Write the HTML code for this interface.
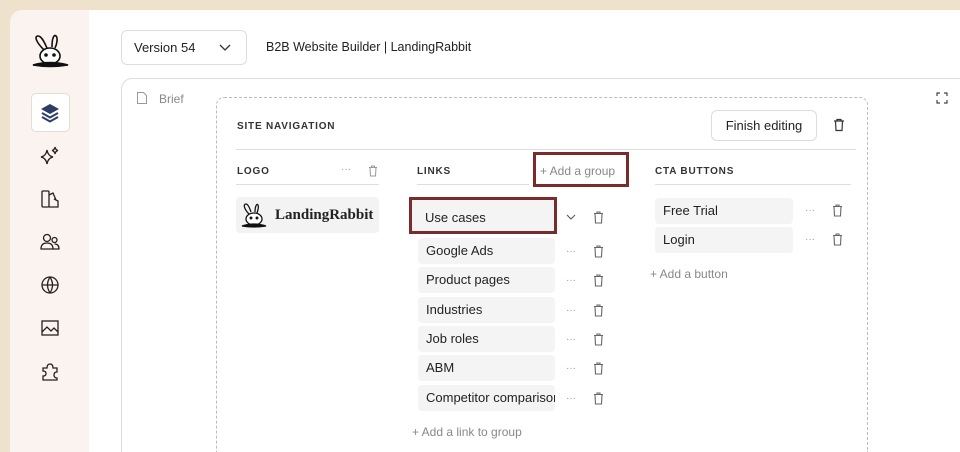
<!DOCTYPE html>
<html><head><meta charset="utf-8"><style>
*{box-sizing:border-box;margin:0;padding:0}
html,body{width:960px;height:452px;overflow:hidden}
body{background:#efe2cc;font-family:"Liberation Sans",sans-serif;position:relative;color:#222}
.a{position:absolute}
.side{left:10px;top:10px;width:80px;height:442px;background:#fbf3ef;border-radius:12px 0 0 0}
.main{left:89px;top:10px;width:871px;height:442px;background:#fff}
.ic{left:38px;width:24px;height:24px}
.item{position:absolute;left:418px;width:137px;height:26px;background:#f4f4f4;border-radius:4px;font-size:13px;line-height:26px;padding-left:8px;white-space:nowrap;overflow:hidden;color:#222}
.cta{position:absolute;left:655px;width:138px;height:26px;background:#f4f4f4;border-radius:4px;font-size:13px;line-height:26px;padding-left:8px}
.dots{position:absolute;font-size:10px;color:#999}
.hd{position:absolute;font-size:10px;font-weight:bold;letter-spacing:0.8px;color:#333}
.ln{position:absolute;height:1px;background:#ddd}
</style></head><body>
<div class="a side"></div>
<div class="a main"></div>
<svg class="a" style="left:30px;top:32px" width="42" height="38" viewBox="0 0 42 38" fill="none" stroke="#111" stroke-width="1.6">
<path d="M14 18 C6 10 4 4 8 4 C12 4 15 12 17 16"/><path d="M22 15 C22 6 24 2 26 4 C28 6 27 12 25 16"/>
<ellipse cx="20" cy="24" rx="10" ry="8" fill="#fff"/><circle cx="16" cy="23" r="1" fill="#111"/><circle cx="24" cy="23" r="1" fill="#111"/>
<path d="M3 33 Q20 28 38 33 Q20 36 3 33Z" fill="#111"/></svg>
<div class="a" style="left:31px;top:93px;width:39px;height:39px;background:#fff;border:1px solid #e3dcd8;border-radius:5px"></div>
<svg class="a ic" style="top:101px" viewBox="0 0 24 24"><path d="M12 3 L21 8 L12 13 L3 8Z" fill="#2c3e66"/><path d="M4 12 L12 16.5 L20 12" stroke="#2c3e66" stroke-width="2" fill="none"/><path d="M4 16 L12 20.5 L20 16" stroke="#2c3e66" stroke-width="2" fill="none"/></svg>
<svg class="a ic" style="top:144px" viewBox="0 0 24 24" fill="none" stroke="#222" stroke-width="1.3"><path d="M9 6 Q10 12 15 13 Q10 14 9 20 Q8 14 3 13 Q8 12 9 6Z"/><path d="M17 3 Q17.5 6 20 6.5 Q17.5 7 17 10 Q16.5 7 14 6.5 Q16.5 6 17 3Z"/></svg>
<svg class="a ic" style="top:187px" viewBox="0 0 24 24" fill="none" stroke="#222" stroke-width="1.3"><rect x="4" y="4" width="7" height="16" rx="1"/><path d="M11 8 L15 6 L18 13 M11 20 H20 V14 L16 12"/></svg>
<svg class="a ic" style="top:230px" viewBox="0 0 24 24" fill="none" stroke="#222" stroke-width="1.3"><circle cx="9" cy="8" r="3.5"/><circle cx="16.5" cy="10" r="2.5"/><path d="M3 19 Q3 13 9 13 Q15 13 15 19Z"/><path d="M15 19 H21 Q21 14 16.5 14"/></svg>
<svg class="a ic" style="top:273px" viewBox="0 0 24 24" fill="none" stroke="#222" stroke-width="1.3"><circle cx="12" cy="12" r="8"/><path d="M4 12H20M12 4Q7 12 12 20M12 4Q17 12 12 20"/></svg>
<svg class="a ic" style="top:316px" viewBox="0 0 24 24" fill="none" stroke="#222" stroke-width="1.3"><rect x="4" y="5" width="16" height="14"/><path d="M4 16 L9 11 L13 15 L16 12 L20 16"/></svg>
<svg class="a ic" style="top:360px" viewBox="0 0 24 24" fill="none" stroke="#222" stroke-width="1.3"><path d="M5 8H9Q9 4 12 4Q15 4 15 8H19V12Q16 12 16 15Q16 18 19 18V20H5V16Q8 16 8 13.5Q8 11 5 11Z"/></svg>
<div class="a" style="left:121px;top:30px;width:126px;height:35px;border:1px solid #ddd;border-radius:6px;font-size:13px;line-height:33px;padding-left:12px">Version 54</div>
<svg class="a" style="left:219px;top:42px" width="12" height="10"><path d="M1 3 L6 8 L11 3" stroke="#333" fill="none" stroke-width="1.3"/></svg>
<div class="a" style="left:266px;top:40px;font-size:12.5px;color:#222">B2B Website Builder | LandingRabbit</div>
<div class="a" style="left:121px;top:78px;width:839px;height:374px;border:1px solid #ddd;border-right:none;border-bottom:none;border-radius:11px 0 0 0"></div>
<svg class="a" style="left:136px;top:91px" width="12" height="14" fill="none" stroke="#999"><path d="M1.5 1.5H7.5L10.5 4.5V12.5H1.5Z"/></svg>
<div class="a" style="left:159px;top:92px;font-size:12px;color:#888">Brief</div>
<svg class="a" style="left:936px;top:92px" width="12" height="12" fill="none" stroke="#444" stroke-width="1.2"><path d="M1 4V1H4M8 1H11V4M11 8V11H8M4 11H1V8"/></svg>
<div class="a" style="left:216px;top:97px;width:652px;height:355px;border:1px dashed #bbb;border-bottom:none;border-radius:8px 8px 0 0"></div>
<div class="hd" style="left:237px;top:121px">SITE NAVIGATION</div>
<div class="a" style="left:711px;top:110px;width:106px;height:31px;border:1px solid #ddd;border-radius:6px;font-size:13px;line-height:29px;text-align:center">Finish editing</div>
<svg class="a" style="left:833px;top:118px" width="12" height="14" fill="none" stroke="#333" stroke-width="1.2"><path d="M1 3H11M4 3V1.5H8V3M2.5 3L3 12.5H9L9.5 3"/></svg>
<div class="ln" style="left:236px;top:149px;width:620px"></div>
<div class="hd" style="left:237px;top:166px">LOGO</div>
<div class="dots" style="left:341px;top:164px">···</div>
<svg class="a" style="left:368px;top:165px" width="10" height="12" fill="none" stroke="#999"><path d="M1 2.5H9M3.5 2.5V1H6.5V2.5M2 2.5L2.5 11H7.5L8 2.5"/></svg>
<div class="ln" style="left:236px;top:184px;width:143px"></div>
<div class="a" style="left:236px;top:197px;width:143px;height:36px;background:#f3f3f3;border-radius:4px"></div>
<svg class="a" style="left:239px;top:200px" width="30" height="30" fill="none" stroke="#111" stroke-width="1.3"><path d="M10 14C5 9 4 4 7 4C9 4 11 9 12 12M16 12C16 6 18 3 19 5C20 7 19 10 18 13"/><ellipse cx="15" cy="19" rx="8" ry="6" fill="#fff"/><circle cx="12" cy="18" r="0.8" fill="#111"/><circle cx="18" cy="18" r="0.8" fill="#111"/><path d="M3 26Q15 22 27 26Q15 28 3 26Z" fill="#111"/></svg>
<div class="a" style="left:275px;top:207px;font-family:'Liberation Serif',serif;font-weight:bold;font-size:15px">LandingRabbit</div>
<div class="hd" style="left:417px;top:166px">LINKS</div>
<div class="ln" style="left:417px;top:184px;width:112px"></div>
<div class="a" style="left:533px;top:152px;width:96px;height:35px;border:3px solid #7a2b2b"></div>
<div class="a" style="left:540px;top:164px;font-size:12px;color:#888">+ Add a group</div>
<div class="a" style="left:409px;top:197px;width:148px;height:37px;border:3px solid #7a2b2b;background:#f4f4f4"></div>
<div class="a" style="left:425px;top:210px;font-size:13px">Use cases</div>
<svg class="a" style="left:566px;top:213px" width="10" height="8"><path d="M1 2L5 6L9 2" stroke="#555" fill="none"/></svg>
<div class="item" style="top:238px">Google Ads</div>
<div class="item" style="top:267px">Product pages</div>
<div class="item" style="top:297px">Industries</div>
<div class="item" style="top:326px">Job roles</div>
<div class="item" style="top:355px">ABM</div>
<div class="item" style="top:385px">Competitor comparisons</div>
<div class="dots" style="left:566px;top:246px">···</div>
<div class="dots" style="left:566px;top:275px">···</div>
<div class="dots" style="left:566px;top:305px">···</div>
<div class="dots" style="left:566px;top:334px">···</div>
<div class="dots" style="left:566px;top:363px">···</div>
<div class="dots" style="left:566px;top:393px">···</div>
<svg class="a" style="left:593px;top:211px" width="11" height="200" fill="none" stroke="#666" stroke-width="1.1">
<g id="t"><path d="M1 2.5H10M4 2.5V1H7V2.5M2 2.5L2.5 12H8.5L9 2.5"/></g>
<use href="#t" y="34"/><use href="#t" y="63"/><use href="#t" y="93"/><use href="#t" y="122"/><use href="#t" y="151"/><use href="#t" y="181"/></svg>
<div class="a" style="left:412px;top:425px;font-size:12px;color:#888">+ Add a link to group</div>
<div class="hd" style="left:655px;top:166px">CTA BUTTONS</div>
<div class="ln" style="left:655px;top:184px;width:196px"></div>
<div class="cta" style="top:198px">Free Trial</div>
<div class="cta" style="top:227px">Login</div>
<div class="dots" style="left:805px;top:205px">···</div>
<div class="dots" style="left:805px;top:234px">···</div>
<svg class="a" style="left:832px;top:204px" width="11" height="45" fill="none" stroke="#666" stroke-width="1.1"><g id="t2"><path d="M1 2.5H10M4 2.5V1H7V2.5M2 2.5L2.5 12H8.5L9 2.5"/></g><use href="#t2" y="29"/></svg>
<div class="a" style="left:650px;top:267px;font-size:12px;color:#888">+ Add a button</div>
</body></html>
